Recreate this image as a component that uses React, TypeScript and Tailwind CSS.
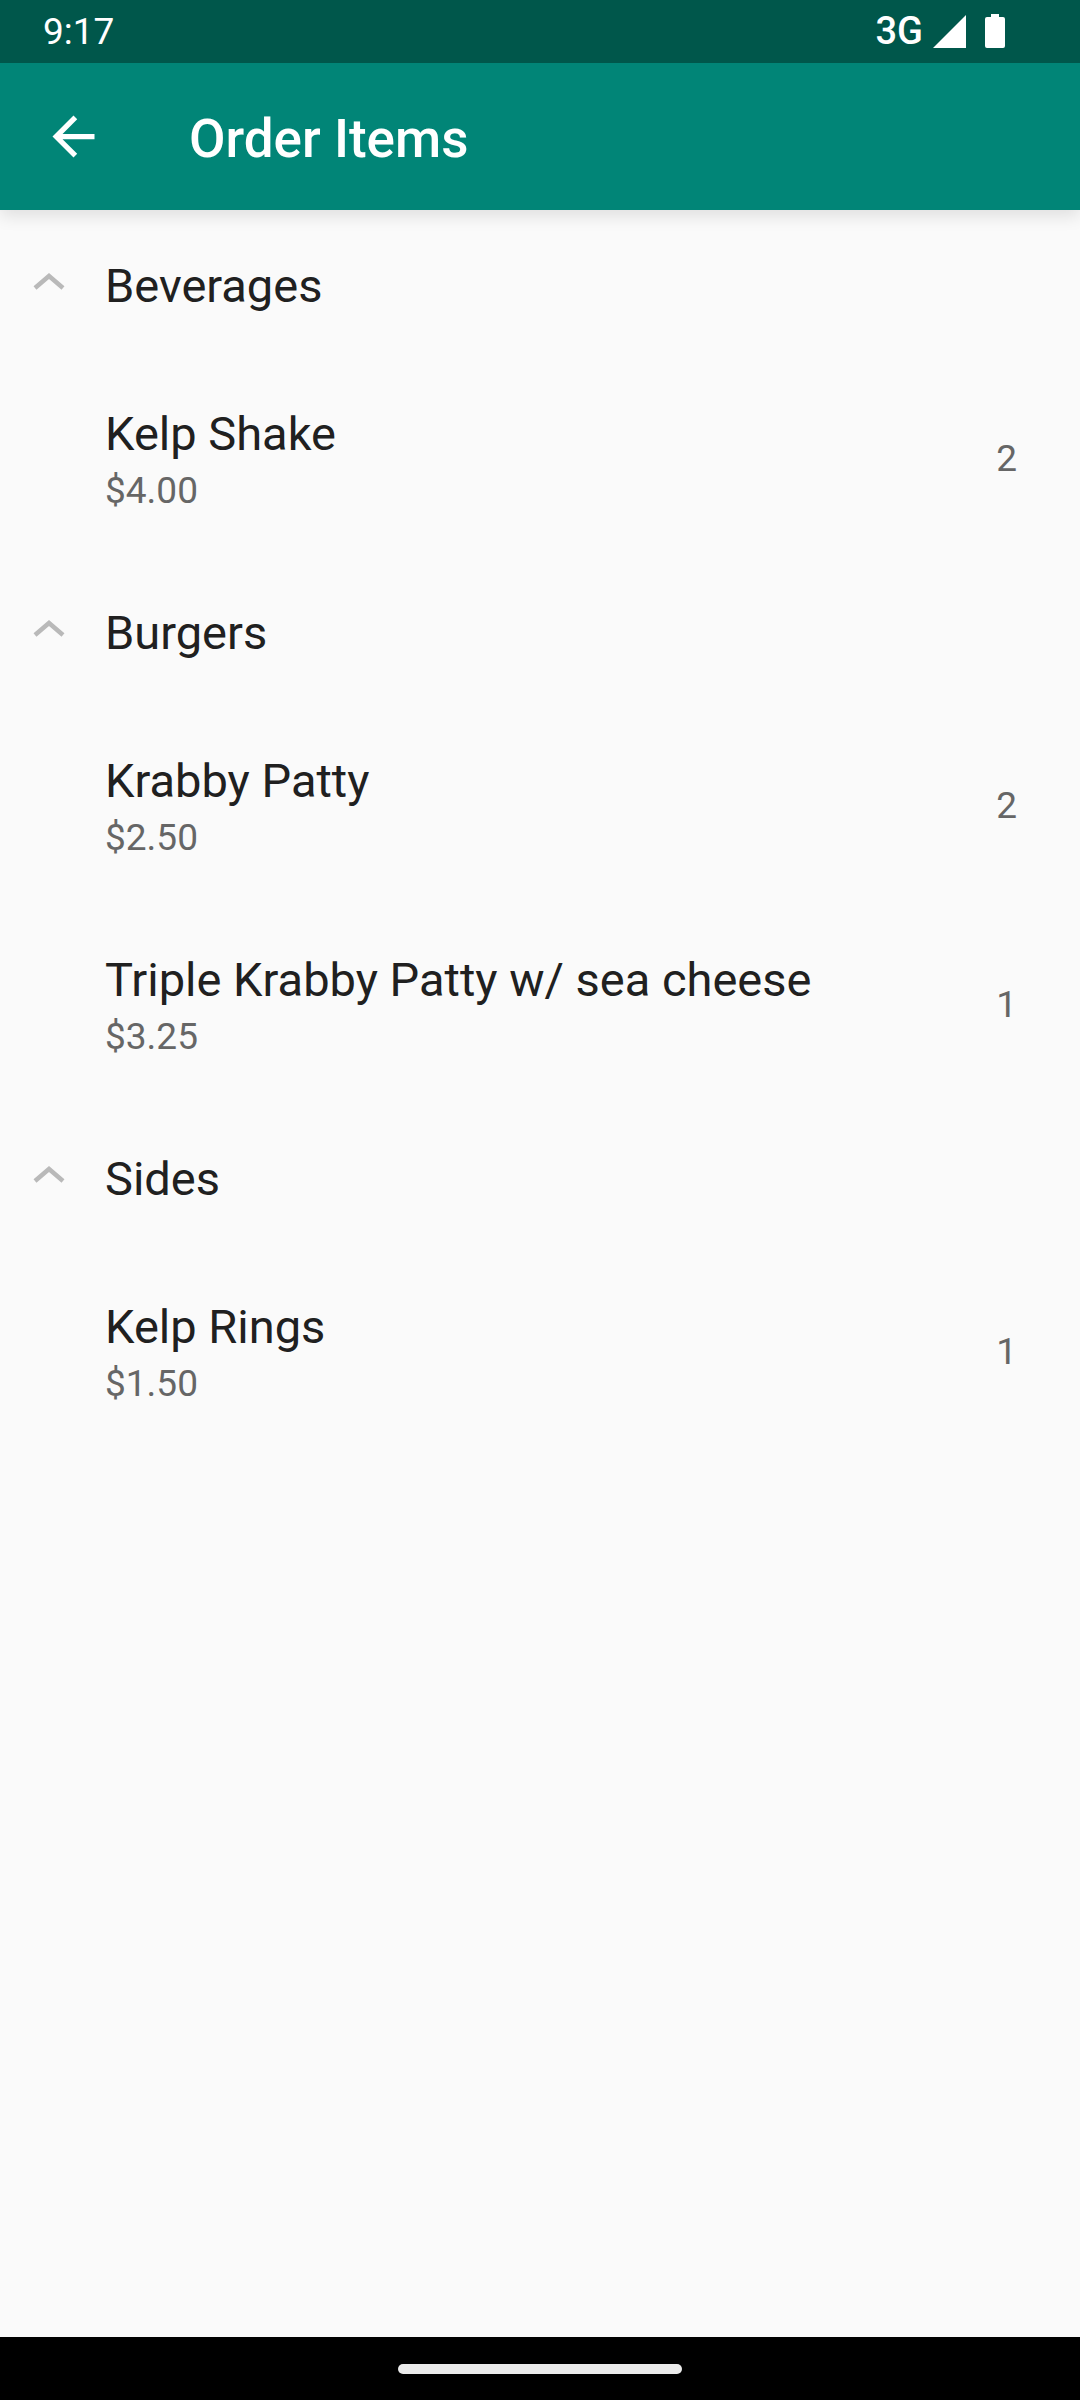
const groups = [
  { name: "Beverages", items: [{ name: "Kelp Shake", price: "$4.00", qty: 2 }] },
  {
    name: "Burgers",
    items: [
      { name: "Krabby Patty", price: "$2.50", qty: 2 },
      { name: "Triple Krabby Patty w/ sea cheese", price: "$3.25", qty: 1 },
    ],
  },
  { name: "Sides", items: [{ name: "Kelp Rings", price: "$1.50", qty: 1 }] },
];

export default function App() {
  return (
    <div className="flex min-h-screen flex-col bg-[#fafafa] font-['Roboto',sans-serif] text-[#202020]">
      <div className="relative z-10 flex h-[63px] items-center justify-between bg-[#00574b] pl-[43px] pr-[75px] text-[37px] leading-none text-white">
        <span>9:17</span>
        <div className="flex items-center pb-px">
          <span className="mr-2.5 text-[38px] font-medium">3G</span>
          <svg className="mr-[19px] size-[33px]" viewBox="0 0 33 33" fill="currentColor" aria-hidden="true">
            <path d="M0 33 33 0v33z" />
          </svg>
          <svg className="h-[34px] w-5" viewBox="0 0 20 34" fill="currentColor" aria-hidden="true">
            <path d="M6 0h8v3h4a2 2 0 0 1 2 2v27a2 2 0 0 1-2 2H2a2 2 0 0 1-2-2V5a2 2 0 0 1 2-2h4z" />
          </svg>
        </div>
      </div>
      <header className="flex h-[147px] items-center bg-[#018577] pl-[42px] text-white shadow-[0_6px_16px_rgba(0,0,0,0.11)]">
        <button type="button" aria-label="Navigate up" className="mr-[84px]">
          <svg className="size-[63px]" viewBox="0 0 24 24" fill="currentColor" aria-hidden="true">
            <path d="M20 11H7.830l5.590-5.590L12 4l-8 8 8 8 1.410-1.410L7.830 13H20v-2z" />
          </svg>
        </button>
        <h1 className="pt-1.5 text-[53px] font-medium leading-none">Order Items</h1>
      </header>
      <main className="flex-1">
        {groups.map((group) => (
          <section key={group.name}>
            <button type="button" aria-expanded="true" className="flex h-[148px] w-full items-center pl-[33px] pt-0.5 text-left">
              <svg className="mb-2 mr-[39px] h-[17px] w-[33px]" viewBox="0 0 33 17" fill="none" stroke="#b9b9b9" strokeWidth="4.500" aria-hidden="true">
                <path d="M2 15 16 3l14 12" />
              </svg>
              <span className="text-[47px] leading-[55px]">{group.name}</span>
            </button>
            <ul>
              {group.items.map((item) => (
                <li key={item.name} className="flex items-center justify-between pb-[45px] pl-[105px] pr-[63px] pt-12">
                  <div>
                    <h2 className="text-[47px] leading-[55px]">{item.name}</h2>
                    <p className="mt-2 text-[37px] leading-[43px] text-[#666666]">{item.price}</p>
                  </div>
                  <span className="pb-0.5 text-[37px] leading-[43px] text-[#666666]">{item.qty}</span>
                </li>
              ))}
            </ul>
          </section>
        ))}
      </main>
      <footer className="flex h-[63px] items-center justify-center bg-black">
        <div className="h-2.5 w-[284px] rounded-full bg-[#ebebeb]" />
      </footer>
    </div>
  );
}
